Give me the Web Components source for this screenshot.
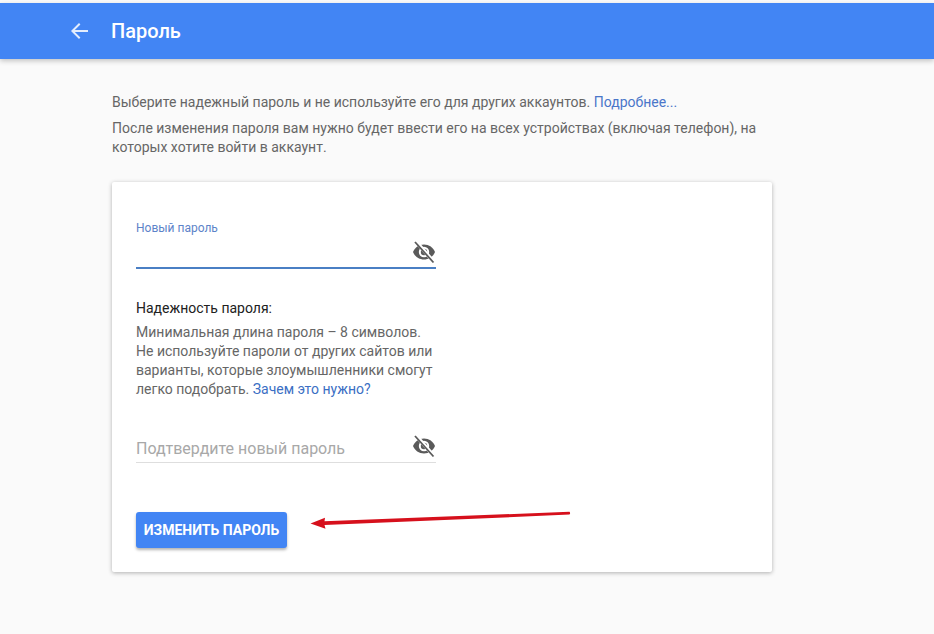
<!DOCTYPE html>
<html lang="ru">
<head>
<meta charset="utf-8">
<title>Пароль</title>
<style>
  html, body { margin: 0; padding: 0; }
  body {
    height: 634px;
    overflow: hidden;
    padding-top: 3px;
    box-sizing: border-box;
    background: #fafafa;
    font-family: Roboto, "Noto Sans", sans-serif;
    color: #666;
  }
</style>
</head>
<body>
<app-bar>Пароль</app-bar>
<page-content>
  <p>Выберите надежный пароль и не используйте его для других аккаунтов. <a>Подробнее...</a></p>
  <p>После изменения пароля вам нужно будет ввести его на всех устройствах (включая телефон), на которых хотите войти в аккаунт.</p>
  <form-card>
    <password-field label="Новый пароль" active></password-field>
    <strength-note>
      Минимальная длина пароля – 8 символов.<br>
      Не используйте пароли от других сайтов или<br>
      варианты, которые злоумышленники смогут<br>
      <span>легко подобрать.</span> <a>Зачем это нужно?</a>
    </strength-note>
    <password-field label="Подтвердите новый пароль"></password-field>
    <raised-button>Изменить пароль</raised-button>
  </form-card>
</page-content>
<red-arrow></red-arrow>

<script>
const eyeOff = `
<svg width="24" height="24" viewBox="0 0 24 24" fill="#5a5a5a">
  <path d="M12 4.500C7 4.500 2.700 7.600 1 12c1.700 4.400 6 7.500 11 7.500s9.300-3.100 11-7.500c-1.700-4.400-6-7.500-11-7.500z"/>
  <circle cx="12" cy="12" r="5.200" fill="#fff"/>
  <circle cx="12" cy="12" r="3.200"/>
  <path d="M4 1.500 L21.500 21.500" stroke="#fff" stroke-width="3.600"/>
  <path d="M3 2 L21.500 22.500" stroke="#5a5a5a" stroke-width="1.800"/>
</svg>`;

class AppBar extends HTMLElement {
  constructor() {
    super();
    this.attachShadow({ mode: "open" }).innerHTML = `
      <style>
        :host {
          display: flex;
          align-items: center;
          height: 56px;
          padding-left: 67px;
          background: #4285f4;
          box-shadow: 0 2px 5px rgba(0,0,0,.22);
          color: #fff;
          position: relative;
        }
        svg { display: block; }
        span { margin-left: 20px; font-size: 20px; font-weight: 500; }
      </style>
      <svg width="24" height="24" viewBox="0 0 24 24" fill="#e3edfd">
        <path d="M21 11H7.830l5.590-5.590L12 4l-8 8 8 8 1.410-1.410L7.830 13H21z"/>
      </svg>
      <span><slot></slot></span>`;
  }
}

class PageContent extends HTMLElement {
  constructor() {
    super();
    this.attachShadow({ mode: "open" }).innerHTML = `
      <style>
        :host {
          display: block;
          width: 660px;
          margin-left: 112px;
          padding-top: 34px;
        }
      </style>
      <slot></slot>`;
  }
}

class FormCard extends HTMLElement {
  constructor() {
    super();
    this.attachShadow({ mode: "open" }).innerHTML = `
      <style>
        :host {
          display: flex;
          flex-direction: column;
          align-items: flex-start;
          box-sizing: border-box;
          height: 390px;
          margin-top: 25px;
          padding: 38px 24px 0;
          background: #fff;
          border-radius: 2px;
          box-shadow: 0 1px 4px rgba(0,0,0,.3);
        }
      </style>
      <slot></slot>`;
  }
}

class PasswordField extends HTMLElement {
  constructor() {
    super();
    const active = this.hasAttribute("active");
    this.attachShadow({ mode: "open" }).innerHTML = `
      <style>
        :host {
          display: block;
          box-sizing: border-box;
          width: 300px;
          height: ${active ? 49 : 33}px;
          position: relative;
          border-bottom: ${active ? "2px solid #4a7fc4" : "1px solid #dedede"};
        }
        .label { display: block; }
        .float { font-size: 12px; line-height: 16px; color: #5d83c9; }
        .hint { font-size: 16px; line-height: 24px; padding-top: 7px; color: #a8a8a8; }
        svg { position: absolute; right: 0; top: ${active ? 20 : 4}px; }
      </style>
      <span class="label ${active ? "float" : "hint"}">${this.getAttribute("label")}</span>
      ${eyeOff}`;
  }
}

class StrengthNote extends HTMLElement {
  constructor() {
    super();
    this.attachShadow({ mode: "open" }).innerHTML = `
      <style>
        :host {
          display: block;
          width: 300px;
          margin-top: 30px;
          margin-bottom: 31px;
          font-size: 14px;
          line-height: 19px;
          color: #666;
        }
        h4 { margin: 0 0 5px; font-size: 14px; line-height: 19px; font-weight: 400; color: #212121; }
      </style>
      <h4>Надежность пароля:</h4>
      <slot></slot>`;
  }
}

class RaisedButton extends HTMLElement {
  constructor() {
    super();
    this.attachShadow({ mode: "open" }).innerHTML = `
      <style>
        :host {
          display: flex;
          align-items: center;
          justify-content: center;
          width: 151px;
          height: 36px;
          margin-top: 49px;
          background: #4285f4;
          border-radius: 3px;
          box-shadow: 0 2px 3px rgba(0,0,0,.3);
          color: #fff;
          font-size: 14px;
          font-weight: 700;
          text-transform: uppercase;
        }
      </style>
      <slot></slot>`;
  }
}

class RedArrow extends HTMLElement {
  constructor() {
    super();
    this.attachShadow({ mode: "open" }).innerHTML = `
      <style>
        :host { position: absolute; left: 300px; top: 505px; width: 280px; height: 30px; }
        svg { display: block; }
      </style>
      <svg width="280" height="30" viewBox="0 0 280 30">
        <path d="M10.500 18.500 L25 12.800 L24.500 16.300 L269.500 6.800 Q270.800 8 269.500 9.600 L24.500 20 L25.500 23.800z" fill="#d6101c"/>
      </svg>`;
  }
}

customElements.define("app-bar", AppBar);
customElements.define("page-content", PageContent);
customElements.define("form-card", FormCard);
customElements.define("password-field", PasswordField);
customElements.define("strength-note", StrengthNote);
customElements.define("raised-button", RaisedButton);
customElements.define("red-arrow", RedArrow);
</script>
<style>
  p { margin: 0 0 7px; font-size: 14px; line-height: 19px; }
  a { color: #4a76c9; }
  strength-note a { color: #3b6fc4; }
</style>
</body>
</html>
